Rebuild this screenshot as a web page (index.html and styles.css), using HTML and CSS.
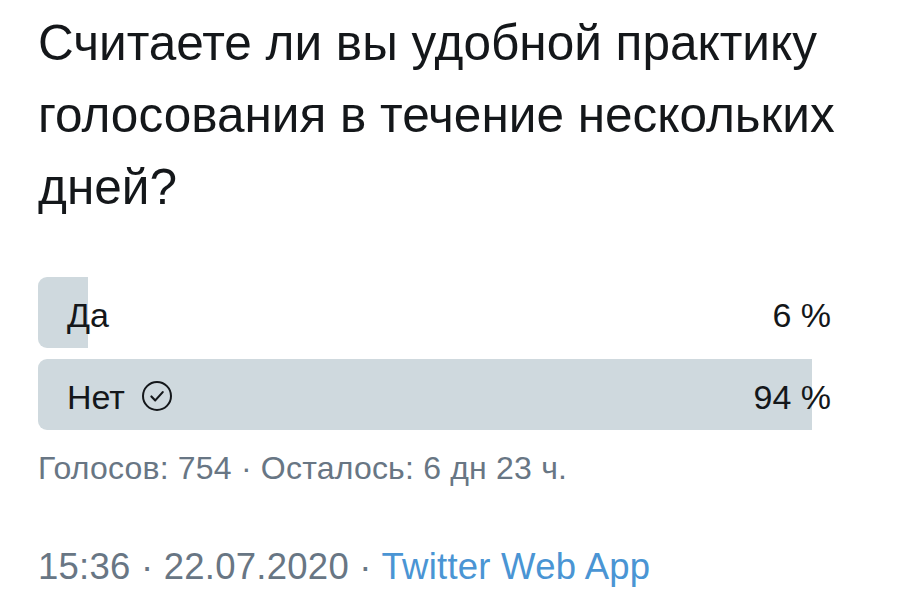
FILE: index.html
```html
<!DOCTYPE html>
<html lang="ru">
<head>
<meta charset="utf-8">
<title>Опрос</title>
<link rel="stylesheet" href="styles.css">
</head>
<body>
<main class="tweet">
  <p class="question">Считаете ли вы удобной практику голосования в течение нескольких дней?</p>
  <div class="poll">
    <div class="option">
      <div class="bar" style="width: 50px"></div>
      <span class="label">Да</span>
      <span class="pct">6 %</span>
    </div>
    <div class="option">
      <div class="bar" style="width: 774px"></div>
      <span class="label">Нет
        <svg class="check" viewBox="0 0 24 24" aria-hidden="true"><circle cx="12" cy="12" r="10.5" fill="none" stroke="#14171a" stroke-width="1.5"/><path d="M7.8 12.3l2.9 3 5.6-6.2" fill="none" stroke="#14171a" stroke-width="1.6" stroke-linecap="round" stroke-linejoin="round"/></svg>
      </span>
      <span class="pct">94 %</span>
    </div>
  </div>
  <p class="stats">Голосов: 754 · Осталось: 6 дн 23 ч.</p>
  <p class="meta">15:36 · 22.07.2020 · <span class="source">Twitter Web App</span></p>
</main>
</body>
</html>
```
FILE: styles.css
```css
html, body {
  margin: 0;
  background: #ffffff;
}

body {
  font-family: "Liberation Sans", Arial, sans-serif;
  color: #14171a;
}

.tweet {
  padding: 7px 0 0 38px;
  width: 820px;
}

.question {
  margin: 0;
  font-size: 49.5px;
  line-height: 72px;
  width: 800px;
}

.poll {
  margin-top: 54px;
  display: flex;
  flex-direction: column;
  gap: 11px;
  width: 793px;
}

.option {
  position: relative;
  height: 71px;
  display: flex;
  align-items: center;
  justify-content: space-between;
  font-size: 34px;
}

.bar {
  position: absolute;
  left: 0;
  top: 0;
  bottom: 0;
  background: #cfd9de;
  border-radius: 9px 0 0 9px;
}

.label, .pct {
  position: relative;
  top: 3px;
}

.label {
  padding-left: 29px;
  display: flex;
  align-items: center;
  gap: 16px;
}

.check {
  width: 32px;
  height: 32px;
  position: relative;
  top: -2px;
}

.stats {
  margin: 20px 0 0;
  font-size: 32px;
  letter-spacing: 0.2px;
  color: #687684;
}

.meta {
  margin: 59px 0 0;
  font-size: 36.5px;
  letter-spacing: 0.25px;
  color: #687684;
}

.source {
  color: #4a95d4;
}
```
